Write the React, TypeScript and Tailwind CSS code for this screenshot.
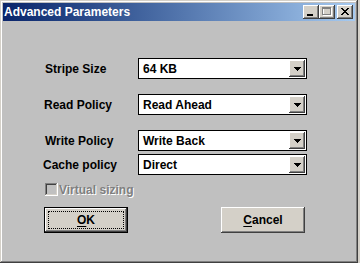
import React from "react";

const raised =
  "shadow-[inset_-1px_-1px_#404040,inset_1px_1px_#ffffff,inset_-2px_-2px_#808080,inset_2px_2px_#d4d0c8]";

function DownArrow() {
  return (
    <svg width="7" height="4" viewBox="0 0 7 4" shapeRendering="crispEdges">
      <rect x="0" y="0" width="7" height="1" fill="#000" />
      <rect x="1" y="1" width="5" height="1" fill="#000" />
      <rect x="2" y="2" width="3" height="1" fill="#000" />
      <rect x="3" y="3" width="1" height="1" fill="#000" />
    </svg>
  );
}

function Combo({ value }: { value: string }) {
  return (
    <div className="w-[169px] h-[21px] bg-white border border-black p-px flex items-stretch">
      <span className="flex-1 pl-[3px] flex items-center leading-none">{value}</span>
      <div className={`w-[16px] bg-[#d4d0c8] flex items-center justify-center ${raised}`}>
        <DownArrow />
      </div>
    </div>
  );
}

function Row({ label, value, labelOffset, className }: { label: string; value: string; labelOffset: string; className: string }) {
  return (
    <div className={`flex items-center ml-[41px] ${className}`}>
      <div className="w-[94px]">
        <span className={`inline-block ${labelOffset}`}>{label}</span>
      </div>
      <Combo value={value} />
    </div>
  );
}

function TitleButton({ children, className = "" }: { children: React.ReactNode; className?: string }) {
  return (
    <div className={`w-[16px] h-[14px] bg-[#d4d0c8] relative ${raised} ${className}`}>{children}</div>
  );
}

export default function App() {
  return (
    <div
      className="w-[360px] h-[263px] bg-[#d4d0c8] text-[12px] font-bold text-black"
      style={{ fontFamily: '"Liberation Sans", Arial, sans-serif' }}
    >
      <div className="w-[358px] h-[263px] p-[3px] bg-[#c0c0c0] shadow-[inset_-1px_-1px_#404040,inset_1px_1px_#d4d0c8,inset_-2px_-2px_#808080,inset_2px_2px_#ffffff] flex flex-col">
        {/* Title bar */}
        <div className="h-[18px] bg-gradient-to-r from-[#0a246a] to-[#a6caf0] flex items-center justify-between pl-[1px] pr-[2px]">
          <span className="text-white text-[12px] leading-none">Advanced Parameters</span>
          <div className="flex items-center">
            <TitleButton>
              <div className="absolute left-[4px] top-[9px] w-[6px] h-[2px] bg-black" />
            </TitleButton>
            <TitleButton>
              <div className="absolute left-[4px] top-[3px] w-[9px] h-[8px] border border-[#ffffff]" />
              <div className="absolute left-[3px] top-[2px] w-[9px] h-[8px] border border-t-2 border-[#808080]" />
            </TitleButton>
            <TitleButton className="ml-[2px]">
              <svg className="absolute left-[4px] top-[3px]" width="8" height="7" viewBox="0 0 8 7" shapeRendering="crispEdges">
                <path d="M0 0h2v1h-2zM6 0h2v1h-2zM1 1h2v1h-2zM5 1h2v1h-2zM2 2h4v1h-4zM3 3h2v1h-2zM2 4h4v1h-4zM1 5h2v1h-2zM5 5h2v1h-2zM0 6h2v1h-2zM6 6h2v1h-2z" fill="#000" />
              </svg>
            </TitleButton>
          </div>
        </div>

        {/* Body */}
        <div className="flex flex-col">
          <Row label="Stripe Size" value="64 KB" labelOffset="ml-[1px]" className="mt-[37px]" />
          <Row label="Read Policy" value="Read Ahead" labelOffset="" className="mt-[15px]" />
          <Row label="Write Policy" value="Write Back" labelOffset="ml-[1px]" className="mt-[15px]" />
          <Row label="Cache policy" value="Direct" labelOffset="-ml-[1px]" className="mt-[3px]" />

          <div className="flex items-center ml-[42px] mt-[8px] h-[13px]">
            <div className="w-[13px] h-[13px] bg-[#c0c0c0] shadow-[inset_-1px_-1px_#ffffff,inset_1px_1px_#808080,inset_-2px_-2px_#d4d0c8,inset_2px_2px_#404040]" />
            <span className="ml-[1px] text-[#808080] [text-shadow:1px_1px_0_#ffffff] leading-none">Virtual sizing</span>
          </div>

          <div className="flex ml-[41px] mt-[11px]">
            <button className="w-[84px] h-[26px] border border-black bg-[#d4d0c8] p-0 relative shadow-[inset_-1px_-1px_#404040,inset_1px_1px_#ffffff,inset_-2px_-2px_#808080]">
              <div className="absolute inset-[3px] border border-dotted border-black flex items-center justify-center">
                <span>
                  <span className="underline underline-offset-2">O</span>K
                </span>
              </div>
            </button>
            <button className={`ml-[93px] w-[84px] h-[26px] bg-[#d4d0c8] flex items-center justify-center ${raised}`}>
              <span>
                <span className="underline underline-offset-2">C</span>ancel
              </span>
            </button>
          </div>
        </div>
      </div>
    </div>
  );
}
